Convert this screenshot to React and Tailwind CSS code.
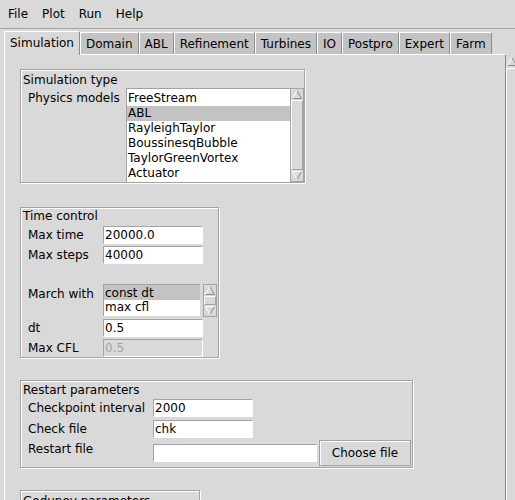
const TABS = ['Simulation', 'Domain', 'ABL', 'Refinement', 'Turbines', 'IO', 'Postpro', 'Expert', 'Farm']

const MODELS = ['FreeStream', 'ABL', 'RayleighTaylor', 'BoussinesqBubble', 'TaylorGreenVortex', 'Actuator']

function Arrow({ up }) {
  return (
    <svg width="12" height="11" viewBox="0 0 12 11" className="block">
      {up ? (
        <>
          <path d="M6 1.5 L10.5 9.5 L1.5 9.5" fill="none" stroke="#8a8a8a" />
          <path d="M1.5 9.5 L6 1.5" fill="none" stroke="#fff" />
        </>
      ) : (
        <>
          <path d="M10.5 1.5 L6 9.5" fill="none" stroke="#8a8a8a" />
          <path d="M6 9.5 L1.5 1.5 L10.5 1.5" fill="none" stroke="#fff" />
        </>
      )}
    </svg>
  )
}

function Scrollbar({ className }) {
  return (
    <div className={`flex flex-col border border-[#a3a3a3] bg-[#d9d9d9] ${className}`}>
      <Arrow up />
      <div className="flex-1 border-t border-l border-white border-b border-r border-b-[#a3a3a3] border-r-[#a3a3a3]" />
      <Arrow />
    </div>
  )
}

function Group({ title, className, titleClass = 'pt-[3px]', children }) {
  return (
    <div className={`border border-[#a3a3a3] shadow-[inset_1px_1px_0_#fff,1px_1px_0_#fff] ${className}`}>
      <div className={`h-[18px] pl-[2px] leading-[14px] ${titleClass}`}>{title}</div>
      {children}
    </div>
  )
}

function Entry({ value, className = 'w-[100px]', disabled }) {
  return (
    <div
      className={`h-[18px] border-t border-l border-[#a3a3a3] border-b border-r border-b-white border-r-white pl-[1px] leading-[17px] ${
        disabled ? 'bg-[#d9d9d9] text-[#a3a3a3]' : 'bg-white'
      } ${className}`}
    >
      {value}
    </div>
  )
}

function Row({ label, labelWidth, children, className = '' }) {
  return (
    <div className={`flex items-center ${className}`}>
      <div className={`pl-[7px] leading-[14px] ${labelWidth}`}>{label}</div>
      {children}
    </div>
  )
}

export default function App() {
  return (
    <div className="w-[515px] h-[500px] overflow-hidden bg-[#d9d9d9] text-[12px] text-black font-['DejaVu_Sans',sans-serif]">
      <div className="h-[29px] border-b border-[#a3a3a3] flex items-center pl-[1px]">
        {['File', 'Plot', 'Run', 'Help'].map(m => (
          <div key={m} className="px-[7px] leading-[14px]">{m}</div>
        ))}
      </div>

      <div className="h-[25px] flex items-end pl-[4px]">
        {TABS.map((t, i) =>
          i === 0 ? (
            <div
              key={t}
              className="relative z-10 -mb-[1px] h-[24px] px-[5px] leading-[23px] bg-[#d9d9d9] border-l border-t border-white border-r border-r-[#8c8c8c] rounded-tr-[3px]"
            >
              {t}
            </div>
          ) : (
            <div
              key={t}
              className="h-[22px] px-[5px] leading-[22px] bg-[#c3c3c3] border-l border-t border-white border-r border-r-[#8c8c8c] rounded-tr-[3px]"
            >
              {t}
            </div>
          )
        )}
      </div>

      <div className="flex pl-[4px] h-[446px]">
        <div className="w-[501px] shrink-0 border-t border-l border-white pl-[15px] pt-[14px]">
          <Group title="Simulation type" className="w-[285px] h-[114px]">
            <div className="flex">
              <div className="w-[105px] pl-[7px] pt-[3px] leading-[14px]">Physics models</div>
              <div className="w-[164px] h-[94px] bg-white border-t border-l border-[#a3a3a3] pt-[2px]">
                {MODELS.map(m => (
                  <div key={m} className={`h-[15px] leading-[15px] pl-[1px] ${m === 'ABL' ? 'bg-[#c3c3c3]' : ''}`}>
                    {m}
                  </div>
                ))}
              </div>
              <Scrollbar className="w-[14px] h-[94px]" />
            </div>
          </Group>

          <Group title="Time control" titleClass="pt-[1px]" className="w-[199px] h-[151px] mt-[24px]">
            <Row label="Max time" labelWidth="w-[82px]">
              <Entry value="20000.0" />
            </Row>
            <Row label="Max steps" labelWidth="w-[82px]" className="mt-[2px]">
              <Entry value="40000" />
            </Row>
            <div className="flex mt-[20px]">
              <div className="w-[82px] pl-[7px] pt-[3px] leading-[14px]">March with</div>
              <div className="w-[97px] h-[32px] bg-white border-t border-l border-[#a3a3a3]">
                <div className="h-[15px] leading-[16px] pl-[1px] bg-[#c3c3c3]">const dt</div>
                <div className="h-[15px] leading-[15px] pl-[1px]">max cfl</div>
              </div>
              <Scrollbar className="w-[14px] h-[33px] ml-[3px]" />
            </div>
            <Row label="dt" labelWidth="w-[82px]" className="mt-[2px]">
              <Entry value="0.5" />
            </Row>
            <Row label="Max CFL" labelWidth="w-[82px]" className="mt-[2px]">
              <Entry value="0.5" disabled />
            </Row>
          </Group>

          <Group title="Restart parameters" titleClass="pt-[2px]" className="w-[393px] h-[88px] mt-[22px]">
            <Row label="Checkpoint interval" labelWidth="w-[132px]">
              <Entry value="2000" />
            </Row>
            <Row label="Check file" labelWidth="w-[132px]" className="mt-[3px]">
              <Entry value="chk" />
            </Row>
            <div className="flex items-center mt-[2px]">
              <div className="w-[132px] pl-[7px] leading-[14px] self-start pt-[2px]">Restart file</div>
              <Entry value="" className="w-[164px]" />
              <button className="ml-[2px] w-[92px] h-[26px] border border-[#a3a3a3] shadow-[inset_1px_1px_0_#fff] bg-[#d9d9d9] leading-[24px] text-center">
                Choose file
              </button>
            </div>
          </Group>

          <Group title="Godunov parameters" className="w-[180px] h-[60px] mt-[22px]" />
        </div>

        <div className="w-[15px] shrink-0 mt-[1px] border-l border-[#8c8c8c] flex flex-col">
          <div className="h-[13px] pt-[1px]">
            <Arrow up />
          </div>
          <div className="flex-1 border-t border-l border-white" />
        </div>
      </div>
    </div>
  )
}
